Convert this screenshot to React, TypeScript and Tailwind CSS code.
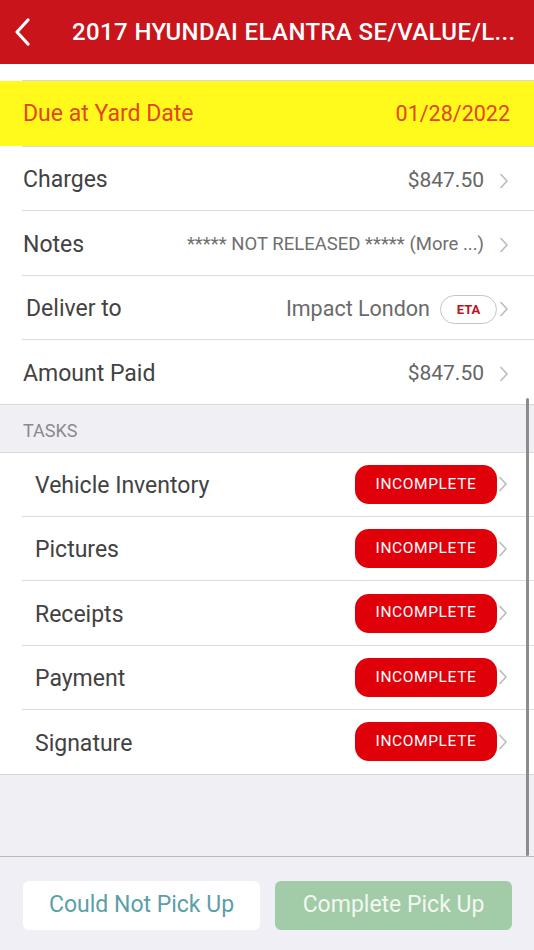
import React from "react";

const Chevron = () => (
  <svg width="10" height="16" viewBox="0 0 10 16" fill="none" className="shrink-0">
    <path d="M2 1.5l6 6.5-6 6.5" stroke="#bdbdbd" strokeWidth="1.7" strokeLinecap="round" strokeLinejoin="round" />
  </svg>
);

const Sep = () => (
  <div className="bg-white">
    <div className="ml-[22px] h-px bg-[#dcdcdc]" />
  </div>
);

const InfoRow = ({ label, children, labelClass = "" }: { label: string; children: React.ReactNode; labelClass?: string }) => (
  <div className="h-[63.4px] bg-white flex items-center pl-[23px] pr-[25px] pt-[4px]">
    <div className={"text-[23px] text-[#424242] " + labelClass}>{label}</div>
    <div className="flex-1 flex items-center justify-end">{children}</div>
  </div>
);

const TaskRow = ({ label }: { label: string }) => (
  <div className="h-[63.4px] bg-white flex items-center pl-[35px] pr-[26px]">
    <div className="text-[23px] text-[#424242] flex-1 pt-[4px]">{label}</div>
    <div className="w-[142px] h-[39px] rounded-[14px] bg-[#e0000a] flex items-center justify-center text-white text-[15.5px] tracking-[0.04em]">
      INCOMPLETE
    </div>
    <div className="ml-[1px]">
      <Chevron />
    </div>
  </div>
);

export default function App() {
  return (
    <div className="w-[534px] h-[950px] flex flex-col bg-[#efeff4] overflow-hidden" style={{ fontFamily: "Roboto, 'Noto Sans', sans-serif" }}>
      <div className="h-[64px] bg-[#c8141a] flex items-center shrink-0">
        <svg width="20" height="30" viewBox="0 0 20 30" fill="none" className="ml-[12px]">
          <path d="M16 3L5 15l11 12" stroke="white" strokeWidth="3.2" strokeLinecap="round" strokeLinejoin="round" />
        </svg>
        <div className="ml-[40px] text-white font-medium text-[24px] whitespace-nowrap tracking-[0.016em]">
          2017 HYUNDAI ELANTRA SE/VALUE/L...
        </div>
      </div>

      <div className="flex-1 relative flex flex-col">
        <div className="h-[16px] bg-white" />
        <div className="h-px bg-white">
          <div className="ml-[22px] h-px bg-[#d8d8d8]" />
        </div>
        <div className="h-[65px] bg-[#fffa1c] flex items-center pl-[23px] pr-[24px] pt-[2px] text-[#e2461e]">
          <div className="text-[23px] flex-1">Due at Yard Date</div>
          <div className="text-[21.5px]">01/28/2022</div>
        </div>
        <Sep />
        <InfoRow label="Charges">
          <span className="text-[21px] text-[#666]">$847.50</span>
          <span className="ml-[15px]"><Chevron /></span>
        </InfoRow>
        <Sep />
        <InfoRow label="Notes">
          <span className="text-[18.5px] text-[#6f6f6f]">***** NOT RELEASED ***** (More ...)</span>
          <span className="ml-[15px]"><Chevron /></span>
        </InfoRow>
        <Sep />
        <InfoRow label="Deliver to" labelClass="ml-[3px]">
          <span className="text-[21.5px] text-[#6a6a6a]">Impact London</span>
          <span className="ml-[10px] w-[57px] h-[29px] rounded-full border border-[#c4c4c4] flex items-center justify-center text-[13px] font-bold text-[#b8141e]">ETA</span>
          <span className="ml-[2px]"><Chevron /></span>
        </InfoRow>
        <Sep />
        <InfoRow label="Amount Paid">
          <span className="text-[21px] text-[#666]">$847.50</span>
          <span className="ml-[15px]"><Chevron /></span>
        </InfoRow>
        <div className="h-px bg-[#d8d8d8]" />
        <div className="h-[47px] flex items-center pl-[23px] pt-[4px] text-[18px] text-[#8a8a8e]">TASKS</div>
        <div className="h-px bg-[#d8d8d8]" />
        <TaskRow label="Vehicle Inventory" />
        <Sep />
        <TaskRow label="Pictures" />
        <Sep />
        <TaskRow label="Receipts" />
        <Sep />
        <TaskRow label="Payment" />
        <Sep />
        <TaskRow label="Signature" />
        <div className="h-px bg-[#d8d8d8]" />
        <div className="flex-1" />
        <div className="absolute right-[5px] top-[334px] bottom-0 w-[3px] rounded-full bg-[#8c8c8c]" />
      </div>

      <div className="h-px bg-[#b8b8b8] shrink-0" />
      <div className="h-[93px] shrink-0 bg-[#f0eff5] flex items-start pt-[24px] pl-[23px] gap-[15px]">
        <div className="w-[237px] h-[49px] rounded-[6px] bg-white flex items-center justify-center text-[23px] text-[#5b9fa9]">
          Could Not Pick Up
        </div>
        <div className="w-[237px] h-[49px] rounded-[6px] bg-[#a2cba8] flex items-center justify-center text-[23px] text-[#f2f7f1]">
          Complete Pick Up
        </div>
      </div>
    </div>
  );
}
